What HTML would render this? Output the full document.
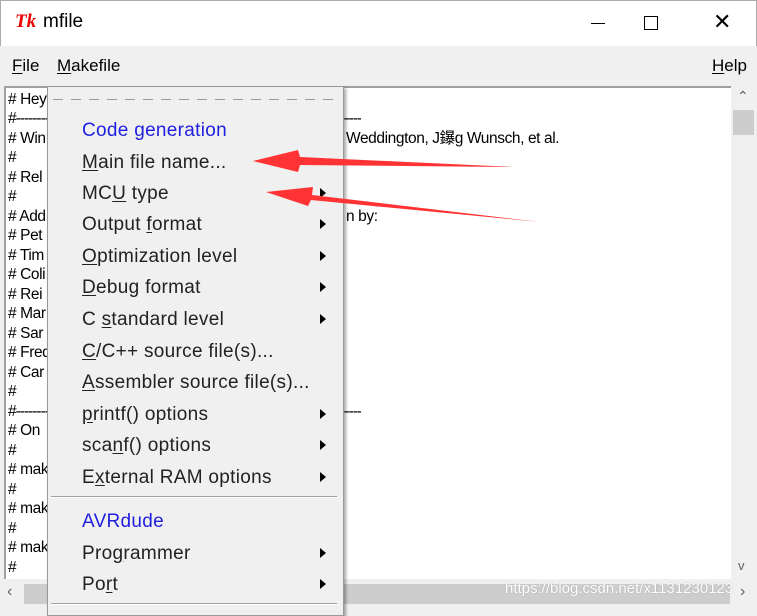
<!DOCTYPE html>
<html><head><style>
*{margin:0;padding:0;box-sizing:border-box}
body{width:757px;height:607px;overflow:hidden;background:#f0f0f0;font-family:"Liberation Sans","Noto Sans CJK SC",sans-serif;position:relative}
.abs{position:absolute;white-space:nowrap}
#title{left:0;top:0;width:757px;height:46px;background:#fff;border:1px solid #aaa;border-bottom:none}
.u{text-decoration:underline;text-underline-offset:2px}
#text{left:4px;top:86px;width:727px;height:493px;background:#fff;border-top:2px solid #a0a0a0;border-left:2px solid #a0a0a0}
.tl{position:absolute;left:2px;font-size:15.5px;letter-spacing:-0.4px;color:#000;line-height:19.5px}
.dash{position:absolute;left:2px;width:353px;overflow:hidden;font-size:15.5px;line-height:19.5px;letter-spacing:-1px}
#menu{left:47px;top:86px;width:297px;height:530px;background:#f0f0f0;border:1px solid #999;box-shadow:2px 2px 3px rgba(0,0,0,0.35)}
.mi{position:absolute;left:34px;font-size:19px;color:#222;line-height:22px;letter-spacing:0.3px}
.ar{position:absolute;left:272px;width:0;height:0;border-top:5px solid transparent;border-bottom:5px solid transparent;border-left:6px solid #000}
.sep{position:absolute;left:3px;width:286px;height:2px;border-top:1px solid #a0a0a0;border-bottom:1px solid #fff}
</style></head><body>
<div id="title" class="abs">
 <div class="abs" style="left:14px;top:10px;font:italic bold 19px 'Liberation Serif',serif;color:#e00">Tk</div>
 <div class="abs" style="left:42px;top:10px;font-size:19px">mfile</div>
 <div class="abs" style="left:590px;top:22px;width:14px;height:1px;background:#000"></div>
 <div class="abs" style="left:643px;top:15px;width:14px;height:14px;border:1px solid #000"></div>
 <div class="abs" style="left:712px;top:8px;font-size:22px;font-weight:300">✕</div>
</div>
<div class="abs" style="left:12px;top:56px;font-size:17px"><span class="u">F</span>ile</div>
<div class="abs" style="left:57px;top:56px;font-size:17px"><span class="u">M</span>akefile</div>
<div class="abs" style="left:712px;top:56px;font-size:17px"><span class="u">H</span>elp</div>
<div id="text" class="abs">
<div class="tl" style="top:2px"># Hey</div>
<div class="dash" style="top:21px">#----------------------------------------------------------------------------------------------------------------------</div>
<div class="tl" style="top:41px"># Win</div>
<div class="tl" style="top:41px;left:340px">Weddington, J鑤g Wunsch, et al.</div>
<div class="tl" style="top:60px">#</div>
<div class="tl" style="top:80px"># Rel</div>
<div class="tl" style="top:99px">#</div>
<div class="tl" style="top:119px"># Add</div>
<div class="tl" style="top:119px;left:340px">n by:</div>
<div class="tl" style="top:138px"># Pet</div>
<div class="tl" style="top:158px"># Tim</div>
<div class="tl" style="top:177px"># Coli</div>
<div class="tl" style="top:197px"># Rei</div>
<div class="tl" style="top:216px"># Mar</div>
<div class="tl" style="top:236px"># Sar</div>
<div class="tl" style="top:255px"># Fred</div>
<div class="tl" style="top:275px"># Car</div>
<div class="tl" style="top:294px">#</div>
<div class="dash" style="top:314px">#----------------------------------------------------------------------------------------------------------------------</div>
<div class="tl" style="top:333px"># On</div>
<div class="tl" style="top:353px">#</div>
<div class="tl" style="top:372px"># mak</div>
<div class="tl" style="top:392px">#</div>
<div class="tl" style="top:411px"># mak</div>
<div class="tl" style="top:431px">#</div>
<div class="tl" style="top:450px"># mak</div>
<div class="tl" style="top:470px">#</div>
</div>
<div class="abs" style="left:731px;top:86px;width:26px;height:494px;background:#f0f0f0"></div>
<div class="abs" style="left:733px;top:110px;width:21px;height:25px;background:#cdcdcd"></div>
<div class="abs" style="left:737px;top:88px;font-size:14px;color:#606060">⌃</div>
<div class="abs" style="left:738px;top:558px;font-size:13px;color:#606060">v</div>
<div class="abs" style="left:0;top:580px;width:757px;height:27px;background:#f0f0f0"></div>
<div class="abs" style="left:24px;top:584px;width:706px;height:20px;background:#cdcdcd"></div>
<div class="abs" style="left:7px;top:583px;font-size:16px;color:#606060">‹</div>
<div class="abs" style="left:740px;top:583px;font-size:16px;color:#606060">›</div>
<div class="abs" style="left:505px;top:580px;font-size:15px;color:#fff;text-shadow:0 0 1px #999">https://blog.csdn.net/x1131230123</div>
<div id="menu" class="abs">
 <div class="abs" style="left:5px;top:12px;width:283px;height:1px;background:repeating-linear-gradient(90deg,#999 0 10px,transparent 10px 18px)"></div>
 <div class="mi" style="top:33px;color:#2020e0">Code generation</div>
 <div class="mi" style="top:65px"><span class="u">M</span>ain file name...</div>
 <div class="mi" style="top:96px">MC<span class="u">U</span> type</div><div class="ar" style="top:101px"></div>
 <div class="mi" style="top:127px">Output <span class="u">f</span>ormat</div><div class="ar" style="top:132px"></div>
 <div class="mi" style="top:159px"><span class="u">O</span>ptimization level</div><div class="ar" style="top:164px"></div>
 <div class="mi" style="top:190px"><span class="u">D</span>ebug format</div><div class="ar" style="top:195px"></div>
 <div class="mi" style="top:222px">C <span class="u">s</span>tandard level</div><div class="ar" style="top:227px"></div>
 <div class="mi" style="top:254px"><span class="u">C</span>/C++ source file(s)...</div>
 <div class="mi" style="top:285px"><span class="u">A</span>ssembler source file(s)...</div>
 <div class="mi" style="top:317px"><span class="u">p</span>rintf() options</div><div class="ar" style="top:322px"></div>
 <div class="mi" style="top:348px">sca<span class="u">n</span>f() options</div><div class="ar" style="top:353px"></div>
 <div class="mi" style="top:380px">E<span class="u">x</span>ternal RAM options</div><div class="ar" style="top:385px"></div>
 <div class="sep" style="top:409px"></div>
 <div class="mi" style="top:424px;color:#2020e0">AVRdude</div>
 <div class="mi" style="top:456px">Pro<span class="u">g</span>rammer</div><div class="ar" style="top:461px"></div>
 <div class="mi" style="top:487px">Po<span class="u">r</span>t</div><div class="ar" style="top:492px"></div>
 <div class="sep" style="top:516px"></div>
</div>
<svg class="abs" style="left:0;top:0" width="757" height="607">
 <polygon points="515,167 300,157 298,150 253,161 298,172 300,165" fill="#f33"/>
 <polygon points="540,222 312,195 313,187 266,192 308,206 311,200" fill="#f33"/>
</svg>
</body></html>
